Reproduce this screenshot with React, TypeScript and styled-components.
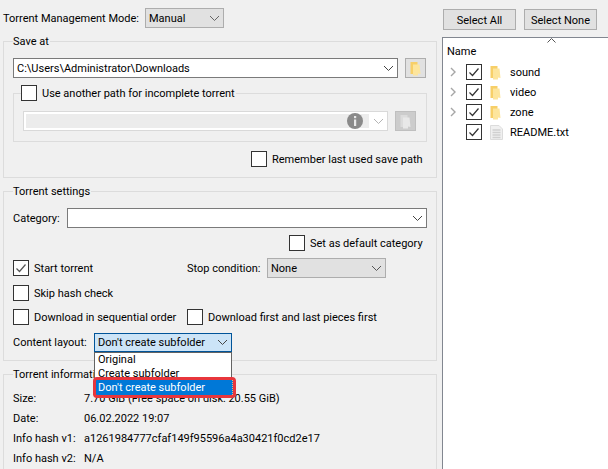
import styled, { createGlobalStyle } from 'styled-components';

const GlobalStyle = createGlobalStyle`
  html, body {
    margin: 0;
    padding: 0;
    background: #f0f0f0;
  }
  body {
    font-family: Roboto, "Noto Sans", sans-serif;
    font-size: 11px;
    color: #000;
  }
`;

const Page = styled.div`
  display: flex;
  width: 608px;
  height: 469px;
  overflow: hidden;
  background: #f0f0f0;
`;

const LeftColumn = styled.div`
  width: 434px;
  margin-left: 3px;
  flex: none;
`;

const RightColumn = styled.div`
  flex: 1;
  margin-left: 5px;
  min-width: 0;
`;

const Row = styled.div<{ $top?: number; $gap?: number; $indent?: number }>`
  display: flex;
  align-items: center;
  height: 20px;
  margin-top: ${p => p.$top ?? 0}px;
  margin-left: ${p => p.$indent ?? 0}px;
  gap: ${p => p.$gap ?? 0}px;
`;

const Label = styled.span<{ $width?: number }>`
  flex: none;
  white-space: nowrap;
  width: ${p => (p.$width ? `${p.$width}px` : 'auto')};
`;

const Group = styled.div<{ $top: number; $height: number }>`
  box-sizing: border-box;
  height: ${p => p.$height}px;
  margin-top: ${p => p.$top}px;
  padding: 0 9px;
  border: 1px solid #dcdcdc;
`;

const GroupTitle = styled.div`
  display: flex;
  align-items: center;
  width: fit-content;
  height: 16px;
  margin-top: -9px;
  padding-right: 1px;
  background: #f0f0f0;
`;

const InnerGroup = styled.div`
  box-sizing: border-box;
  height: 49px;
  margin-top: 15px;
  padding: 0 9px;
  border: 1px solid #dcdcdc;
`;

const InnerTitle = styled.div`
  display: flex;
  align-items: center;
  gap: 5px;
  width: fit-content;
  height: 16px;
  margin-top: -9px;
  margin-left: -2px;
  padding-right: 1px;
  background: #f0f0f0;
`;

const Box = styled.span`
  box-sizing: border-box;
  flex: none;
  display: flex;
  align-items: center;
  justify-content: center;
  width: 16px;
  height: 16px;
  background: #fff;
  border: 1px solid #333;
`;

const CheckRow = styled.label`
  display: flex;
  align-items: center;
  flex: none;
  gap: 5px;
  white-space: nowrap;
`;

const Combo = styled.div<{ $width?: number; $kind?: 'flat' | 'edit' | 'focus' | 'off' }>`
  box-sizing: border-box;
  position: relative;
  display: flex;
  align-items: center;
  justify-content: space-between;
  flex: none;
  width: ${p => (p.$width ? `${p.$width}px` : 'auto')};
  height: ${p => (p.$kind === 'focus' ? 19 : 20)}px;
  padding: ${p => (p.$kind === 'off' ? '0 3px 0 2px' : p.$kind === 'edit' ? '1px 3px 0 3px' : '0 3px 0 3px')};
  white-space: nowrap;
  background: ${p =>
    p.$kind === 'edit' || p.$kind === 'off' ? '#fff' : p.$kind === 'focus' ? '#cce4f7' : '#e1e1e1'};
  border: 1px solid
    ${p =>
      p.$kind === 'edit' ? '#7a7a7a' : p.$kind === 'focus' ? '#005499' : p.$kind === 'off' ? '#d9d9d9' : '#adadad'};
`;

const ComboText = styled.span`
  flex: 1;
`;

const OffField = styled.span`
  flex: 1;
  box-sizing: border-box;
  height: 14px;
  margin-right: 4px;
  padding-right: 6px;
  display: flex;
  align-items: center;
  justify-content: flex-end;
  background: #ececec;
`;

const FolderButton = styled.div<{ $off?: boolean }>`
  box-sizing: border-box;
  flex: none;
  display: flex;
  align-items: center;
  justify-content: center;
  width: 21px;
  height: 20px;
  background: ${p => (p.$off ? '#cccccc' : '#e1e1e1')};
  border: 1px solid ${p => (p.$off ? '#bfbfbf' : '#adadad')};
`;

const Popup = styled.div`
  box-sizing: border-box;
  position: absolute;
  z-index: 3;
  top: 18px;
  left: -1px;
  width: 138px;
  height: 31px;
  padding-left: 3px;
  background: #fff;
  border: 1px solid #646464;
  border-bottom: none;
`;

const PopupItem = styled.div`
  height: 14px;
  line-height: 14px;
`;

const Picked = styled.div`
  box-sizing: border-box;
  position: absolute;
  z-index: 4;
  top: 43px;
  left: -2px;
  width: 143px;
  height: 21px;
  display: flex;
  border: 3px solid #e8363c;
  border-radius: 4px;
  background: #0078d7;
  color: #fff;
`;

const PickedText = styled.span`
  flex: 1;
  padding-left: 2px;
  line-height: 15px;
  border-right: 1px dotted #e9b27c;
`;

const TopButtons = styled.div`
  display: flex;
  gap: 8px;
  margin: 9px 0 0 1px;
`;

const PlainButton = styled.button`
  box-sizing: border-box;
  width: 73px;
  height: 21px;
  padding: 1px 0 0;
  font: inherit;
  color: #000;
  background: #e1e1e1;
  border: 1px solid #adadad;
`;

const FileList = styled.div`
  box-sizing: border-box;
  position: relative;
  height: 432px;
  margin-top: 7px;
  padding: 5px 0 0 4px;
  background: #fff;
  border-top: 1px solid #828790;
  border-left: 1px solid #828790;
`;

const SortArrow = styled.svg`
  position: absolute;
  top: 0;
  left: 104px;
`;

const ListHeader = styled.div`
  height: 19px;
  line-height: 17px;
`;

const TreeRow = styled.div`
  display: flex;
  align-items: center;
  height: 20px;
`;

const Twisty = styled.span`
  flex: none;
  width: 19px;
  height: 10px;
  display: flex;
  align-items: center;
  padding-left: 3px;
  box-sizing: border-box;
`;

const TreeIcon = styled.span`
  flex: none;
  display: flex;
  width: 20px;
  margin-left: 8px;
`;

const Check = ({ color = '#333' }: { color?: string }) => (
  <svg width="12" height="12" viewBox="0 0 12 12">
    <path d="M1.5 6.5 L4.5 9.5 L10.5 2.5" fill="none" stroke={color} strokeWidth="1.2" />
  </svg>
);

const Chevron = ({ color = '#444' }: { color?: string }) => (
  <svg width="11" height="7" viewBox="0 0 11 7">
    <path d="M1 1 L5.5 5.5 L10 1" fill="none" stroke={color} strokeWidth="1" />
  </svg>
);

const Folder = ({ off }: { off?: boolean }) => (
  <svg width="11" height="15" viewBox="0 0 11 15">
    <path d="M0.5 1 H7.5 V13 H0.5 Z" fill={off ? '#dcdcdc' : '#f7cf68'} />
    <path d="M3 3.5 H9.5 L10.5 13 L8 12.5 V14.5 H3 Z" fill={off ? '#e8e8e8' : '#fde59c'} />
  </svg>
);

const FileIcon = () => (
  <svg width="13" height="15" viewBox="0 0 13 15">
    <path d="M0.5 0.5 H9 L12.5 4 V14.5 H0.5 Z" fill="#f0f0f0" stroke="#dcdcdc" />
    <path d="M2.5 5 H10.5 M2.5 7.5 H10.5 M2.5 10 H10.5 M2.5 12.5 H10.5" stroke="#d0d0d0" strokeWidth="1.4" />
  </svg>
);

const Info = () => (
  <svg width="16" height="16" viewBox="0 0 16 16">
    <circle cx="8" cy="8" r="8" fill="#8a8a8a" />
    <rect x="7" y="3" width="2.2" height="2.2" fill="#e9e9e9" />
    <rect x="7" y="6.5" width="2.2" height="6.5" fill="#e9e9e9" />
  </svg>
);

const tree = [
  { name: 'sound', folder: true },
  { name: 'video', folder: true },
  { name: 'zone', folder: true },
  { name: 'README.txt', folder: false },
];

const info = [
  ['Size:', '7.70 GiB (Free space on disk: 20.55 GiB)'],
  ['Date:', '06.02.2022 19:07'],
  ['Info hash v1:', 'a1261984777cfaf149f95596a4a30421f0cd2e17'],
  ['Info hash v2:', 'N/A'],
];

export default function App() {
  return (
    <Page>
      <GlobalStyle />
      <LeftColumn>
        <Row $top={8}>
          <Label $width={142}>Torrent Management Mode:</Label>
          <Combo $width={79}>
            <ComboText>Manual</ComboText>
            <Chevron color="#666" />
          </Combo>
        </Row>

        <Group $top={13} $height={137}>
          <GroupTitle>Save at</GroupTitle>
          <Row $top={9} $gap={7}>
            <Combo $width={385} $kind="edit">
              <ComboText>C:\Users\Administrator\Downloads</ComboText>
              <Chevron />
            </Combo>
            <FolderButton>
              <Folder />
            </FolderButton>
          </Row>
          <InnerGroup>
            <InnerTitle>
              <Box />
              Use another path for incomplete torrent
            </InnerTitle>
            <Row $top={10} $gap={7}>
              <Combo $width={365} $kind="off">
                <OffField>
                  <Info />
                </OffField>
                <Chevron color="#b4b4b4" />
              </Combo>
              <FolderButton $off>
                <Folder off />
              </FolderButton>
            </Row>
          </InnerGroup>
          <Row $top={7} $indent={238}>
            <CheckRow>
              <Box />
              Remember last used save path
            </CheckRow>
          </Row>
        </Group>

        <Group $top={13} $height={170}>
          <GroupTitle>Torrent settings</GroupTitle>
          <Row $top={9}>
            <Label $width={54}>Category:</Label>
            <Combo $width={360} $kind="edit">
              <ComboText />
              <Chevron />
            </Combo>
          </Row>
          <Row $top={5} $indent={276}>
            <CheckRow>
              <Box />
              Set as default category
            </CheckRow>
          </Row>
          <Row $top={5}>
            <CheckRow>
              <Box>
                <Check color="#555" />
              </Box>
              <Label $width={153}>Start torrent</Label>
            </CheckRow>
            <Label $width={80}>Stop condition:</Label>
            <Combo $width={119}>
              <ComboText>None</ComboText>
              <Chevron color="#555" />
            </Combo>
          </Row>
          <Row $top={5}>
            <CheckRow>
              <Box />
              Skip hash check
            </CheckRow>
          </Row>
          <Row $top={4}>
            <CheckRow>
              <Box />
              <Label $width={153}>Download in sequential order</Label>
            </CheckRow>
            <CheckRow>
              <Box />
              Download first and last pieces first
            </CheckRow>
          </Row>
          <Row $top={5}>
            <Label $width={81}>Content layout:</Label>
            <Combo $width={138} $kind="focus">
              <ComboText>Don&apos;t create subfolder</ComboText>
              <Chevron color="#444" />
              <Popup>
                <PopupItem>Original</PopupItem>
                <PopupItem>Create subfolder</PopupItem>
              </Popup>
              <Picked>
                <PickedText>Don&apos;t create subfolder</PickedText>
              </Picked>
            </Combo>
          </Row>
        </Group>

        <Group $top={13} $height={110}>
          <GroupTitle>Torrent information</GroupTitle>
          {info.map(([name, value], i) => (
            <Row key={name} $top={i === 0 ? 6 : 0}>
              <Label $width={71}>{name}</Label>
              <Label>{value}</Label>
            </Row>
          ))}
        </Group>
      </LeftColumn>

      <RightColumn>
        <TopButtons>
          <PlainButton>Select All</PlainButton>
          <PlainButton>Select None</PlainButton>
        </TopButtons>
        <FileList>
          <SortArrow width="9" height="5" viewBox="0 0 9 5">
            <path d="M0.5 4.5 L4.5 0.5 L8.5 4.5" fill="none" stroke="#555" strokeWidth="1" />
          </SortArrow>
          <ListHeader>Name</ListHeader>
          {tree.map(item => (
            <TreeRow key={item.name}>
              <Twisty>
                {item.folder && (
                  <svg width="6" height="10" viewBox="0 0 6 10">
                    <path d="M1 1 L5 5 L1 9" fill="none" stroke="#a6a6a6" strokeWidth="1.4" />
                  </svg>
                )}
              </Twisty>
              <Box>
                <Check />
              </Box>
              <TreeIcon>{item.folder ? <Folder /> : <FileIcon />}</TreeIcon>
              <Label>{item.name}</Label>
            </TreeRow>
          ))}
        </FileList>
      </RightColumn>
    </Page>
  );
}
